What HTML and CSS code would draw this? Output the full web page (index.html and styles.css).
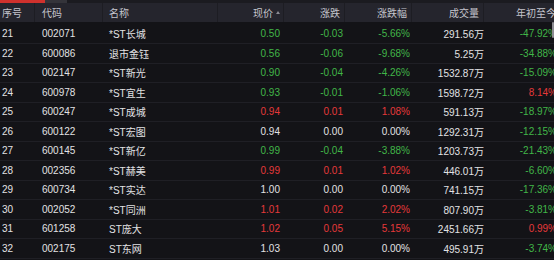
FILE: index.html
```html
<!DOCTYPE html>
<html>
<head>
    <title>行情列表</title>
    <link rel="stylesheet" href="styles.css">
</head>
<body>
    <div class="topbar">
        <span class="tab active"></span>
        <span class="tab"></span>
    </div>

    <div class="quote-table">
        <div class="row head">
            <div class="cell c-no">序号</div>
            <div class="cell c-code">代码</div>
            <div class="cell c-name">名称</div>
            <div class="cell c-price">现价<span class="sort-up"></span></div>
            <div class="cell c-chg">涨跌</div>
            <div class="cell c-pct">涨跌幅</div>
            <div class="cell c-vol">成交量</div>
            <div class="cell c-ytd">年初至今</div>
        </div>
        <div id="rows"></div>
    </div>

    <div class="scroll-thumb"></div>

    <script>
        // 行情数据
        const stocks = [
            [21, '002071', '*ST长城', '0.50', '-0.03', '-5.66%', '291.56万', '-47.92%'],
            [22, '600086', '退市金钰', '0.56', '-0.06', '-9.68%', '5.25万', '-34.88%'],
            [23, '002147', '*ST新光', '0.90', '-0.04', '-4.26%', '1532.87万', '-15.09%'],
            [24, '600978', '*ST宜生', '0.93', '-0.01', '-1.06%', '1598.72万', '8.14%'],
            [25, '600247', '*ST成城', '0.94', '0.01', '1.08%', '591.13万', '-18.97%'],
            [26, '600122', '*ST宏图', '0.94', '0.00', '0.00%', '1292.31万', '-12.15%'],
            [27, '600145', '*ST新亿', '0.99', '-0.04', '-3.88%', '1203.73万', '-21.43%'],
            [28, '002356', '*ST赫美', '0.99', '0.01', '1.02%', '446.01万', '-6.60%'],
            [29, '600734', '*ST实达', '1.00', '0.00', '0.00%', '741.15万', '-17.36%'],
            [30, '002052', '*ST同洲', '1.01', '0.02', '2.02%', '807.90万', '-3.81%'],
            [31, '601258', 'ST庞大', '1.02', '0.05', '5.15%', '2451.66万', '0.99%'],
            [32, '002175', 'ST东网', '1.03', '0.00', '0.00%', '495.91万', '-3.74%']
        ];

        function colorOf(value) {
            const n = parseFloat(value);
            if (n > 0) return 'up';
            if (n < 0) return 'down';
            return 'flat';
        }

        const rowsDiv = document.getElementById('rows');
        stocks.forEach(s => {
            const trend = colorOf(s[4]);
            const row = document.createElement('div');
            row.className = 'row';
            row.innerHTML = `
                <div class="cell c-no">${s[0]}</div>
                <div class="cell c-code">${s[1]}</div>
                <div class="cell c-name">${s[2]}</div>
                <div class="cell c-price ${trend}">${s[3]}</div>
                <div class="cell c-chg ${trend}">${s[4]}</div>
                <div class="cell c-pct ${trend}">${s[5]}</div>
                <div class="cell c-vol">${s[6]}</div>
                <div class="cell c-ytd ${colorOf(s[7])}">${s[7]}</div>`;
            rowsDiv.appendChild(row);
        });
    </script>
</body>
</html>
```

FILE: styles.css
```css
body {
    margin: 0;
    width: 554px;
    height: 260px;
    overflow: hidden;
    position: relative;
    background-color: #131317;
    font-family: "Liberation Sans", "Noto Sans CJK SC", sans-serif;
    font-size: 10px;
    color: #e2e2e4;
}
.topbar {
    display: flex;
    height: 3px;
    background-color: #1b1b20;
}
.tab {
    width: 22px;
    background-color: #34343a;
}
.tab.active {
    width: 45px;
    background-color: #cf312d;
}
.quote-table {
    width: 557px;
}
.row {
    display: grid;
    grid-template-columns: 35px 68px 115px 66px 61px 67px 72px 73px;
    height: 19.5px;
    align-items: center;
    border-bottom: 1px solid #1f1f25;
    box-sizing: border-box;
}
.row.head {
    height: 19px;
    margin-bottom: 2.5px;
    background-color: #25252d;
    border-bottom: none;
    color: #c4c4cc;
    align-items: stretch;
}
.row.head .cell {
    display: flex;
    align-items: center;
    border-right: 1px solid #1d1d23;
}
.row.head .cell.c-price,
.row.head .cell.c-chg,
.row.head .cell.c-pct,
.row.head .cell.c-vol,
.row.head .cell.c-ytd {
    justify-content: flex-end;
}
.cell {
    white-space: nowrap;
    overflow: hidden;
}
.c-no { padding-left: 2px; }
.c-code { padding-left: 7px; }
.c-name { padding-left: 6px; }
.c-price { text-align: right; padding-right: 4px; }
.c-chg { text-align: right; padding-right: 2px; }
.c-pct { text-align: right; padding-right: 2px; }
.c-vol { text-align: right; padding-right: 0; }
.c-ytd { text-align: right; padding-right: 0; }
.row.head .c-chg,
.row.head .c-pct,
.row.head .c-vol { padding-right: 4px; }
.row.head .c-price { padding-right: 3px; }
.sort-up {
    display: inline-block;
    margin-left: 3px;
    border-left: 2.5px solid transparent;
    border-right: 2.5px solid transparent;
    border-bottom: 3px solid #8a8a92;
}
.up { color: #e5393a; }
.down { color: #41b648; }
.flat { color: #e2e2e4; }
.scroll-thumb {
    position: absolute;
    right: 0;
    top: 22px;
    width: 2px;
    height: 16px;
    border-radius: 1px;
    background-color: #8c8c92;
}
```
